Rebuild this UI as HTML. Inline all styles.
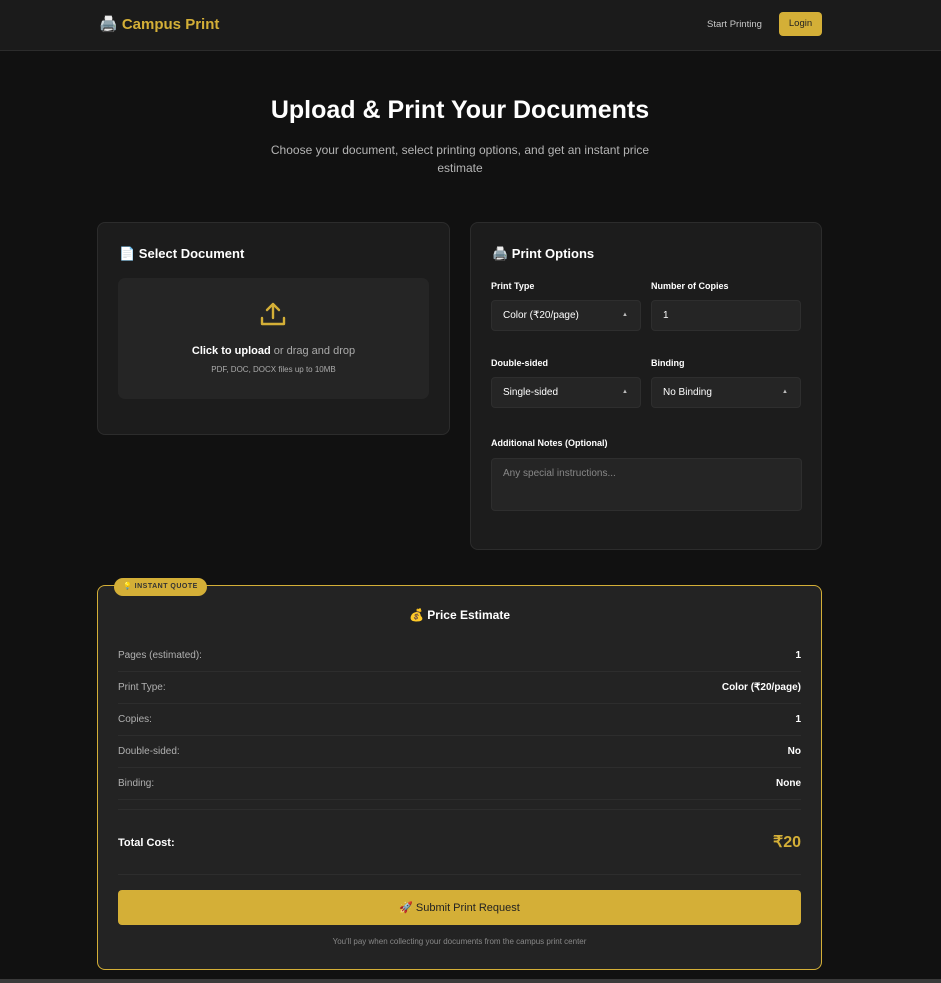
<!DOCTYPE html>
<html><head><meta charset="utf-8"><style>
*{box-sizing:border-box;margin:0;padding:0}
body{width:941px;height:983px;background:#111;font-family:"Liberation Sans",sans-serif;color:#fff;position:relative;overflow:hidden}
.hdr{position:absolute;left:0;top:0;width:941px;height:51px;background:#1b1b1b;border-bottom:1px solid #2c2c2c}
.logo{position:absolute;left:99px;top:15px;font-size:15px;font-weight:bold;color:#d4af37}
.nav{position:absolute;left:707px;top:19px;font-size:9.5px;color:#c8c8c8}
.login{position:absolute;left:779px;top:12px;width:43px;height:24px;background:#d4af37;border-radius:4px;color:#222;font-size:9.5px;text-align:center;line-height:24px}
h1{position:absolute;left:0;width:920px;text-align:center;top:96px;font-size:25px}
.sub{position:absolute;left:260px;width:400px;text-align:center;top:141px;font-size:12px;line-height:18px;color:#b4b4b4}
.card{position:absolute;background:#1c1c1c;border:1px solid #2c2c2c;border-radius:8px}
.ct{position:absolute;font-size:13px;font-weight:bold}
.drop{position:absolute;left:20px;top:55px;width:311px;height:121px;background:#252525;border-radius:7px;text-align:center}
.lbl{position:absolute;font-size:9px;font-weight:bold}
.inp{position:absolute;width:150px;height:31px;background:#252525;border:1px solid #2e2e2e;border-radius:4px;font-size:10px;padding-left:11px;line-height:29px}
.inp .ar{position:absolute;right:12px;top:0;font-size:6px;color:#bbb}
.q{position:absolute;left:97px;top:585px;width:725px;height:385px;background:#232323;border:1px solid #d4af37;border-radius:8px}
.badge{position:absolute;left:16px;top:-8px;height:18px;padding:0 9px;background:#d4af37;border-radius:9px;font-size:7px;font-weight:bold;color:#333;line-height:18px;letter-spacing:.5px}
.row{position:absolute;left:20px;width:683px;height:32px;border-bottom:1px solid #2d2d2d;font-size:10px;line-height:32px}
.row span{color:#b0b0b0}.row b{float:right}
.btn{position:absolute;left:20px;top:304px;width:683px;height:35px;background:#d4af37;border-radius:4px;text-align:center;line-height:37px;font-size:11px;color:#222}
.bar{position:absolute;left:0;top:979px;width:941px;height:4px;background:#3a3a3a}
</style></head><body>
<div class="hdr"><div class="logo">🖨️ Campus Print</div><div class="nav">Start Printing</div><div class="login">Login</div></div>
<h1>Upload &amp; Print Your Documents</h1>
<div class="sub">Choose your document, select printing options, and get an instant price estimate</div>
<div class="card" style="left:97px;top:222px;width:353px;height:213px">
<div class="ct" style="left:21px;top:23px">📄 Select Document</div>
<div class="drop">
<svg style="position:absolute;left:141px;top:22px" width="28" height="28" viewBox="0 0 28 28" fill="none" stroke="#d4af37" stroke-width="2.4" stroke-linecap="round" stroke-linejoin="round"><path d="M14 18V4M8 10l6-6 6 6M3 18v6h22v-6"/></svg>
<div style="position:absolute;top:67px;width:100%;font-size:11px;color:#aaa"><b style="color:#fff">Click to upload</b> or drag and drop</div>
<div style="position:absolute;top:87px;width:100%;font-size:8px;color:#aaa">PDF, DOC, DOCX files up to 10MB</div>
</div></div>
<div class="card" style="left:470px;top:222px;width:352px;height:328px">
<div class="ct" style="left:21px;top:23px">🖨️ Print Options</div>
<div class="lbl" style="left:20px;top:58px">Print Type</div>
<div class="lbl" style="left:180px;top:58px">Number of Copies</div>
<div class="inp" style="left:20px;top:77px">Color (₹20/page)<span class="ar">▲</span></div>
<div class="inp" style="left:180px;top:77px">1</div>
<div class="lbl" style="left:20px;top:135px">Double-sided</div>
<div class="lbl" style="left:180px;top:135px">Binding</div>
<div class="inp" style="left:20px;top:154px">Single-sided<span class="ar">▲</span></div>
<div class="inp" style="left:180px;top:154px">No Binding<span class="ar">▲</span></div>
<div class="lbl" style="left:20px;top:215px">Additional Notes (Optional)</div>
<div class="inp" style="left:20px;top:235px;width:311px;height:53px;line-height:1;padding-top:10px;color:#888">Any special instructions...</div>
</div>
<div class="q"><div class="badge">💡 INSTANT QUOTE</div>
<div style="position:absolute;top:22px;width:100%;text-align:center;font-size:12px;font-weight:bold">💰 Price Estimate</div>
<div class="row" style="top:54px"><span>Pages (estimated):</span><b>1</b></div>
<div class="row" style="top:86px"><span>Print Type:</span><b>Color (₹20/page)</b></div>
<div class="row" style="top:118px"><span>Copies:</span><b>1</b></div>
<div class="row" style="top:150px"><span>Double-sided:</span><b>No</b></div>
<div class="row" style="top:182px"><span>Binding:</span><b>None</b></div>
<div class="row" style="top:223px;height:66px;line-height:66px;border-top:1px solid #2d2d2d"><span style="color:#fff;font-weight:bold;font-size:11px">Total Cost:</span><b style="color:#d4af37;font-size:16px">₹20</b></div>
<div class="btn">🚀 Submit Print Request</div>
<div style="position:absolute;top:351px;width:100%;text-align:center;font-size:8px;color:#888">You'll pay when collecting your documents from the campus print center</div>
</div>
<div class="bar"></div>
</body></html>
